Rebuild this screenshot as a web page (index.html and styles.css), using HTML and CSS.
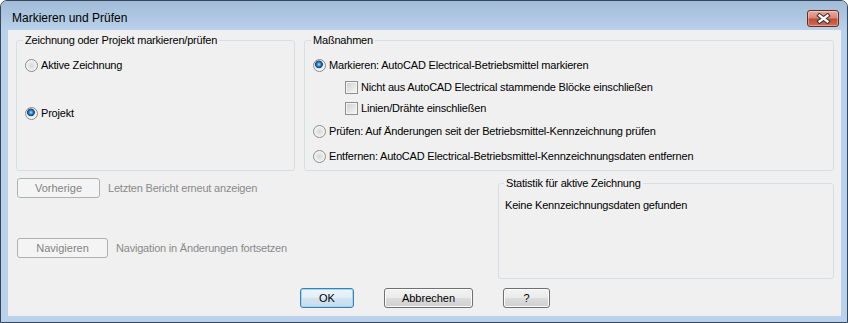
FILE: index.html
```html
<!DOCTYPE html>
<html lang="de">
<head>
    <meta charset="UTF-8">
    <title>Markieren und Prüfen</title>
    <link rel="stylesheet" href="styles.css">
</head>
<body>
    <div class="window">
        <div class="title-bar">
            <span class="title">Markieren und Prüfen</span>
            <button class="close-btn" aria-label="Schließen">
                <svg width="15" height="11" viewBox="0 0 15 11">
                    <path d="M3.5 2.5 L11.5 8.5 M11.5 2.5 L3.5 8.5" stroke="#3a3a3a" stroke-width="4.4" stroke-linecap="square" fill="none"/>
                    <path d="M3.5 2.5 L11.5 8.5 M11.5 2.5 L3.5 8.5" stroke="#fff" stroke-width="2.2" stroke-linecap="square" fill="none"/>
                </svg>
            </button>
        </div>
        <div class="client">
            <div class="top-row">
                <fieldset class="group group-scope">
                    <legend>Zeichnung oder Projekt markieren/prüfen</legend>
                    <label class="option"><span class="radio"></span>Aktive Zeichnung</label>
                    <label class="option opt-project"><span class="radio checked"></span>Projekt</label>
                </fieldset>
                <fieldset class="group group-actions">
                    <legend>Maßnahmen</legend>
                    <label class="option"><span class="radio checked"></span>Markieren: AutoCAD Electrical-Betriebsmittel markieren</label>
                    <label class="option opt-sub opt-blocks"><span class="checkbox"></span>Nicht aus AutoCAD Electrical stammende Blöcke einschließen</label>
                    <label class="option opt-sub opt-wires"><span class="checkbox"></span>Linien/Drähte einschließen</label>
                    <label class="option opt-check"><span class="radio"></span>Prüfen: Auf Änderungen seit der Betriebsmittel-Kennzeichnung prüfen</label>
                    <label class="option opt-remove"><span class="radio"></span>Entfernen: AutoCAD Electrical-Betriebsmittel-Kennzeichnungsdaten entfernen</label>
                </fieldset>
            </div>

            <div class="middle-row">
                <div class="history">
                    <div class="history-row">
                        <button class="btn btn-prev" disabled>Vorherige</button>
                        <span class="hint">Letzten Bericht erneut anzeigen</span>
                    </div>
                    <div class="history-row">
                        <button class="btn btn-nav" disabled>Navigieren</button>
                        <span class="hint">Navigation in Änderungen fortsetzen</span>
                    </div>
                </div>
                <fieldset class="group group-stats">
                    <legend>Statistik für aktive Zeichnung</legend>
                    <p class="stats-text">Keine Kennzeichnungsdaten gefunden</p>
                </fieldset>
            </div>

            <!-- Dialogschaltflächen -->
            <div class="dialog-buttons">
                <button class="btn btn-ok">OK</button>
                <button class="btn btn-cancel">Abbrechen</button>
                <button class="btn btn-help">?</button>
            </div>
        </div>
    </div>
</body>
</html>
```

FILE: styles.css
```css
* {
    margin: 0;
    padding: 0;
    box-sizing: border-box;
}

body {
    background: #fff;
    font-family: "Liberation Sans", Arial, sans-serif;
    font-size: 11px;
    letter-spacing: -0.2px;
    color: #000;
}

.window {
    width: 848px;
    height: 323px;
    border: 1px solid #34475c;
    border-radius: 7px 7px 0 0;
    background: #b9d1ea;
    display: flex;
    flex-direction: column;
    overflow: hidden;
}

.title-bar {
    height: 29px;
    flex: none;
    display: flex;
    align-items: flex-start;
    justify-content: space-between;
    padding: 0 8px 0 11px;
    background: linear-gradient(#a2bbd7, #b9d1ea);
}

.title {
    margin-top: 10px;
    font-size: 12px;
    line-height: 15px;
    letter-spacing: 0;
}

.close-btn {
    margin-top: 9px;
    width: 32px;
    height: 17px;
    border: 1px solid #6b2b21;
    border-radius: 3px;
    background: linear-gradient(#eaac9e 0%, #d98675 45%, #c24b35 55%, #d26d55 100%);
    box-shadow: inset 0 0 0 1px rgba(255,255,255,0.35);
    display: flex;
    align-items: center;
    justify-content: center;
}

.client {
    flex: 1;
    margin: 0 6px 6px 7px;
    background: #f0f0f0;
    padding: 4px 7px 0 8px;
}

.top-row {
    display: flex;
    gap: 9px;
    height: 137px;
}

.group {
    min-width: 0;
    border: 1px solid #d5dfe5;
    border-radius: 3px;
    padding: 12px 8px 0;
}

.group legend {
    padding: 0 2px;
    margin-left: -2px;
    line-height: 13px;
}

.group-scope {
    width: 279px;
}

.group-actions {
    flex: 1;
}

.option {
    display: flex;
    align-items: center;
    height: 13px;
    line-height: 13px;
    white-space: nowrap;
}

.opt-project { margin-top: 35px; }
.opt-blocks { margin-top: 9px; }
.opt-wires { margin-top: 8px; }
.opt-check { margin-top: 10px; }
.opt-remove { margin-top: 12px; }

.opt-sub {
    margin-left: 32px;
}

.radio {
    flex: none;
    width: 13px;
    height: 13px;
    margin-right: 3px;
    border: 1px solid #8a8c8e;
    border-radius: 50%;
    background: radial-gradient(circle at 50% 50%, #d8d8d8 0, #e6e6e6 3px, #f6f6f6 5.5px);
}

.radio.checked {
    background: radial-gradient(circle at 45% 40%, #a8e6ff 0, #3795dc 1.6px, #17508c 3.2px, #24466c 3.6px, #e6e6e6 4.2px, #f6f6f6 5.5px);
}

.checkbox {
    flex: none;
    width: 13px;
    height: 13px;
    margin-right: 3px;
    border: 1px solid #8e8f8f;
    background: linear-gradient(135deg, #cdcfd2, #f7f7f7);
    box-shadow: inset 0 0 0 1px #f4f4f4;
}

.middle-row {
    display: flex;
    justify-content: space-between;
    margin-top: 6px;
}

.history {
    padding: 1px 0 0 1px;
}

.history-row {
    display: flex;
    align-items: center;
    gap: 8px;
}

.history-row + .history-row {
    margin-top: 40px;
}

.hint {
    color: #8a8a8a;
}

.group-stats {
    width: 336px;
    height: 102px;
    padding: 9px 6px 0;
}

.group-stats legend {
    margin-left: -1px;
}

.stats-text {
    line-height: 13px;
}

.btn {
    font: inherit;
    height: 20px;
    color: #000;
    border: 1px solid #707070;
    border-radius: 3px;
    background: linear-gradient(#f2f2f2 0%, #ebebeb 49%, #dddddd 50%, #cfcfcf 100%);
    box-shadow: inset 0 0 0 1px #fcfcfc;
}

.btn:disabled {
    color: #838383;
    border-color: #adb2b5;
    background: #f4f4f4;
    box-shadow: none;
}

.btn-prev { width: 83px; }
.btn-nav { width: 91px; }

.dialog-buttons {
    display: flex;
    justify-content: center;
    gap: 30px;
    margin-top: 9px;
}

.btn-ok {
    width: 54px;
    border-color: #3c7fb1;
    background: linear-gradient(#edf5fb 0%, #e2edf6 49%, #d3e4f1 50%, #c6dcee 100%);
    box-shadow: inset 0 0 0 1px #9cd8f6;
}

.btn-cancel { width: 89px; }
.btn-help { width: 47px; }
```
